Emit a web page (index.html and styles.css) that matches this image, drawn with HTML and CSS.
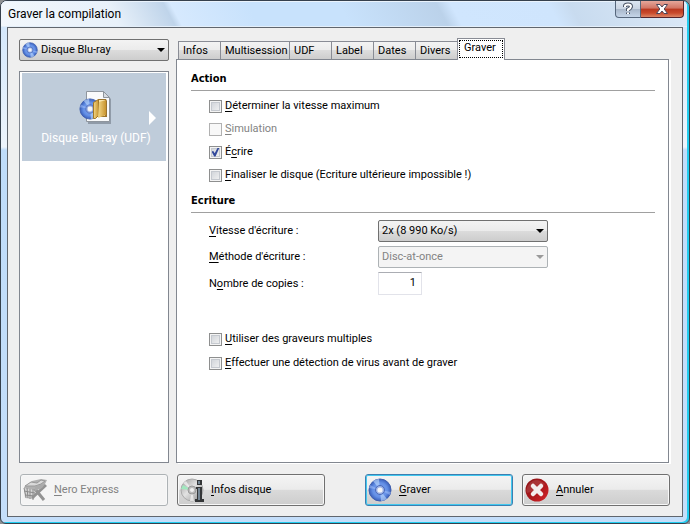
FILE: index.html
```html
<!DOCTYPE html>
<html lang="fr">
<head>
<meta charset="utf-8">
<title>Graver la compilation</title>
<link rel="stylesheet" href="styles.css">
</head>
<body>
<svg class="defs" aria-hidden="true">
  <defs>
    <radialGradient id="blue" cx=".5" cy=".5" r=".55"><stop offset="0" stop-color="#7fa3ef"/><stop offset=".6" stop-color="#6490e6"/><stop offset="1" stop-color="#2c50ae"/></radialGradient>
    <linearGradient id="gold"><stop offset="0" stop-color="#f3d888"/><stop offset="1" stop-color="#c8942f"/></linearGradient>
    <linearGradient id="silver" x2="1" y2="1"><stop offset="0" stop-color="#999"/><stop offset=".45" stop-color="#e2e2e2"/><stop offset="1" stop-color="#8e8e8e"/></linearGradient>
    <linearGradient id="red" x2="1" y2="1"><stop offset="0" stop-color="#8c1417"/><stop offset=".5" stop-color="#a8181c"/><stop offset="1" stop-color="#d8252b"/></linearGradient>
    <symbol id="disc" viewBox="0 0 24 24">
      <circle cx="12" cy="12" r="11" fill="url(#blue)" stroke="#3e5eae"/>
      <path d="M12 12 5 3Q8 1 11 1zM12 12 19 21Q16 23 13 23z" fill="#c0dcff" opacity=".6"/>
      <path d="M12 12 1 10 2 7zM12 12 23 14 22 17z" fill="#a5c4fb" opacity=".5"/>
      <circle cx="12" cy="12" r="4.500" fill="#9db3e6" stroke="#4968b8"/>
      <circle cx="12" cy="12" r="2.600" fill="#f4f4f6"/>
    </symbol>
  </defs>
</svg>
<div class="window">
  <header class="titlebar">
    <h1>Graver la compilation</h1>
    <div class="caption">
      <button class="help" type="button" aria-label="Aide"><svg width="12" height="14" viewBox="0 0 12 14"><path d="M3 5V4Q3 2.500 6 2.500T9 4.500Q9 6 6 7.500V9M6 10.500V12" fill="none" stroke="#4b5566" stroke-width="4"/><path d="M3 5V4Q3 2.500 6 2.500T9 4.500Q9 6 6 7.500V9M6 10.500V12" fill="none" stroke="#fff" stroke-width="2"/></svg></button>
      <button class="close" type="button" aria-label="Fermer"><svg width="14" height="12" viewBox="0 0 14 12"><path d="M1.500 1.500H5L7 4 9 1.500H12.500L9.200 6 12.500 10.500H9L7 8 5 10.500H1.500L4.800 6z" fill="#fff" stroke="#4b4558"/></svg></button>
    </div>
  </header>
  <main class="client">
    <div class="content">
      <aside class="side">
        <div class="combo disc-combo">
          <svg class="combo-icon" width="16" height="16"><use href="#disc"/></svg>
          <select aria-label="Type de disque"><option>Disque Blu-ray</option></select>
        </div>
        <div class="list">
          <button class="item" type="button">
            <svg width="34" height="34" viewBox="0 0 34 34">
              <path d="M9 3H26L32 9V34H9z" fill="#77818d" opacity=".65"/>
              <path d="M7.500 1.500H24.500L30.500 7.500V31.500H7.500z" fill="#f9fafb" stroke="#8e959d"/>
              <path d="M24.500 1.500V7.500H30.500z" fill="#d7dbe0" stroke="#8e959d"/>
              <svg x="0" y="8" width="22" height="22"><use href="#disc"/></svg>
              <path d="M19 9H27L28 11V27H18V14z" fill="#9b742e"/>
              <path d="M20 10H26V26H19z" fill="#f8e5ac"/>
              <path d="M14.500 12.500 19.500 9.500V25.500L16.500 28.500H14.500z" fill="url(#gold)" stroke="#a27726"/>
              <path d="M20 12 27 10V25L19 28z" fill="url(#gold)"/>
            </svg>
            <span>Disque Blu-ray (UDF)</span>
          </button>
        </div>
      </aside>
      <section class="tabs">
        <div class="tablist" role="tablist">
          <button type="button" role="tab">Infos</button>
          <button class="wide" type="button" role="tab">Multisession</button>
          <button type="button" role="tab">UDF</button>
          <button type="button" role="tab">Label</button>
          <button type="button" role="tab">Dates</button>
          <button type="button" role="tab">Divers</button>
          <button type="button" role="tab" aria-selected="true"><span>Graver</span></button>
        </div>
        <div class="panel" role="tabpanel">
          <h2>Action</h2>
          <div class="checks">
            <label><input type="checkbox"><span><u>D</u>éterminer la vitesse maximum</span></label>
            <label class="disabled"><input type="checkbox" disabled><span><u>S</u>imulation</span></label>
            <label><input type="checkbox" checked><span>É<u>c</u>rire</span></label>
            <label><input type="checkbox"><span><u>F</u>inaliser le disque (Ecriture ultérieure impossible !)</span></label>
          </div>
          <h2>Ecriture</h2>
          <div class="fields">
            <label for="speed"><u>V</u>itesse d'écriture :</label>
            <div class="combo"><select id="speed"><option>2x (8 990 Ko/s)</option></select></div>
            <label for="method"><u>M</u>éthode d'écriture :</label>
            <div class="combo off"><select id="method" disabled><option>Disc-at-once</option></select></div>
            <label for="copies">N<u>o</u>mbre de copies :</label>
            <input id="copies" type="text" value="1">
          </div>
          <div class="checks extra">
            <label><input type="checkbox"><span><u>U</u>tiliser des graveurs multiples</span></label>
            <label><input type="checkbox"><span><u>E</u>ffectuer une détection de virus avant de graver</span></label>
          </div>
        </div>
      </section>
    </div>
    <footer class="actions">
      <button type="button" disabled>
        <svg width="24" height="24" viewBox="0 0 24 24">
          <path d="M1 9 9 3 18 1 24 2 21 8 13 10 11 21 2 20z" fill="#b0b0b0"/>
          <path d="M2 8 8 4 14 5 18 2 22 3 18 6 12 8z" fill="#d9d9d9" stroke="#999"/>
          <path d="M1 10 12 12 11 21 3 19z" fill="#d5d5d5"/>
          <path d="M1 10 3 19M4 10 5 20M7 11V21M10 11V22M1 13 12 15M2 17 12 18" stroke="#8b8b8b" fill="none"/>
          <path d="M23 7 9 20M12 11 21 22" stroke="#929292" stroke-width="3"/>
          <path d="M12 8 22 6 19 10 12 13z" fill="#aaa"/>
        </svg>
        <span><u>N</u>ero Express</span>
      </button>
      <button type="button">
        <svg width="24" height="24" viewBox="0 0 24 24">
          <circle cx="12" cy="12" r="11" fill="url(#silver)" stroke="#aaa"/>
          <path d="M12 12 3 5 6 3zM12 12 14 23 10 23z" fill="#fff" opacity=".6"/>
          <path d="M12 12 1 11 3 7z" fill="#a0e8be"/>
          <circle cx="12" cy="12" r="4" fill="#bcbcbc" stroke="#999"/><circle cx="12" cy="12" r="2" fill="#f1f1f1"/>
          <path d="M17 2H22V7H17zM16 9H22V21H24V24H15V21H17V11H16z" fill="#343638"/>
          <path d="M18 3H20V6H18zM18 10H20V22H18z" fill="#758694"/>
        </svg>
        <span><u>I</u>nfos disque</span>
      </button>
      <button class="default" type="button">
        <svg width="24" height="24"><use href="#disc"/></svg>
        <span><u>G</u>raver</span>
      </button>
      <button type="button">
        <svg width="24" height="24" viewBox="0 0 24 24">
          <circle cx="12" cy="12" r="11.500" fill="url(#red)"/>
          <path d="M4 6Q11-2 20 6Q15 12 2 15Q0 11 4 6z" fill="#fff" opacity=".12"/>
          <path d="M8 8 16 16M16 8 8 16" stroke="#f3eded" stroke-width="4.500" stroke-linecap="round"/>
        </svg>
        <span><u>A</u>nnuler</span>
      </button>
    </footer>
  </main>
</div>
</body>
</html>
```
FILE: styles.css
```css
* { box-sizing: border-box; }

body {
  margin: 0;
  background: #8d9093;
  color: #000;
  font: 11px/14px Roboto, Tahoma, sans-serif;
}

button, select, input { font: inherit; color: inherit; margin: 0; }
h1, h2 { margin: 0; }
u { text-underline-offset: 2px; }
.defs { position: absolute; width: 0; height: 0; }

.window {
  display: flex;
  flex-direction: column;
  min-height: 100vh;
  padding: 0 6px 6px;
  border: 1px solid #35404d;
  border-radius: 7px 7px 6px 6px;
  background: linear-gradient(#c8dff7, #d5e8fb 28px, #edf4fc 146px, #bfdcfa 149px, #c4defa);
  box-shadow: inset -2px -1px #20cdf0;
}

.titlebar {
  display: flex;
  justify-content: space-between;
  height: 26px;
  margin: 0 -4px 0 -6px;
  padding: 0 3px 0 7px;
  border-radius: 6px 6px 0 0;
  background: linear-gradient(62deg, #f2f7fc 0, #e8f1fa 17%, #bfd4ea 25%, #d6e9fe 26%, #c8e2fc 37%, #c8e2fc 50%, #bbd2ea 64%, #d0e6fe 66%, #cfe5fd 80%, #c8dbef 83%, #dce9f7);
  box-shadow: inset 0 1px #eaf3fc, inset 0 -1px #e4effa;
}

.titlebar h1 {
  font: 12px/26px Roboto, "Open Sans", sans-serif;
}

.caption { display: flex; height: 17px; }
.caption button {
  display: flex;
  align-items: center;
  justify-content: center;
  padding: 0;
  border: 1px solid #56677c;
  border-top: 0;
}
.help {
  width: 26px;
  border-radius: 0 0 0 4px;
  background: linear-gradient(#dce6f1, #c9d4e2 50%, #a7b6c9 50%, #c5d5e8);
}
.caption .close {
  width: 43px;
  border-color: #57242a;
  border-left: 0;
  border-radius: 0 0 4px 0;
  background: linear-gradient(#e5a79b, #d17463 45%, #b93820 50%, #c94a2c 75%, #dd8565);
}

.client {
  flex: 1;
  display: flex;
  flex-direction: column;
  gap: 11px;
  padding: 11px 13px 10px 11px;
  border: 1px solid #60666e;
  background: #efefef;
}

.content { flex: 1; display: flex; gap: 7px; }

.side {
  display: flex;
  flex-direction: column;
  gap: 10px;
  width: 150px;
}

.combo { position: relative; width: 170px; height: 22px; }
.combo::after {
  content: "";
  position: absolute;
  top: 9px;
  right: 4px;
  border: 4px solid transparent;
  border-top-color: #000;
  border-bottom: 0;
  pointer-events: none;
}
.combo select {
  appearance: none;
  width: 100%;
  height: 100%;
  padding: 0 16px 0 3px;
  border: 1px solid #707070;
  border-radius: 2px;
  background: linear-gradient(#f3f3f3, #ebebeb 50%, #dcdcdc 50%, #cdcdcd);
}
.combo.off::after { border-top-color: #9a9a9a; }
.combo.off select {
  border-color: #adb2b5;
  background: #f4f4f4;
  color: #838383;
  opacity: 1;
}
.combo.disc-combo { width: 100%; }
.disc-combo select { padding-left: 21px; }
.combo-icon { position: absolute; left: 3px; top: 3px; pointer-events: none; }

.list {
  flex: 1;
  padding: 1px 2px;
  border: 1px solid #828790;
  background: #fff;
}
.item {
  position: relative;
  display: flex;
  flex-direction: column;
  align-items: center;
  gap: 7px;
  width: 100%;
  height: 88px;
  padding: 17px 0 0 4px;
  border: 0;
  background: #bfccda;
  color: #fff;
  font-size: 12px;
}
.item::after {
  content: "";
  position: absolute;
  top: 38px;
  right: 10px;
  border: 7px solid transparent;
  border-left-color: #fff;
  border-right: 0;
}

.tabs { flex: 1; display: flex; flex-direction: column; }
.tablist {
  display: flex;
  align-items: flex-end;
  height: 21px;
  padding-left: 2px;
  margin-bottom: -1px;
}
.tablist button {
  min-width: 42px;
  height: 19px;
  padding: 0 0 0 4px;
  border: 1px solid #898c95;
  border-right-width: 0;
  background: linear-gradient(#f3f3f3, #ebebeb 50%, #dddddd 50%, #cdcdcd);
  text-align: left;
}
.tablist .wide { min-width: 69px; }
.tablist button[aria-selected] {
  z-index: 1;
  height: 22px;
  min-width: 48px;
  padding: 1px 1px 2px;
  border-right-width: 1px;
  border-bottom: 0;
  background: #fff;
}
.tablist span {
  display: block;
  padding: 0 4px 2px;
  border: 1px dotted #000;
}

.panel {
  flex: 1;
  padding: 12px 13px 12px 14px;
  border: 1px solid #828790;
  background: #fff;
  box-shadow: 2px 1px #fff;
}
.panel h2 {
  padding-bottom: 4px;
  border-bottom: 1px solid #a0a0a0;
  font: bold 11px/14px "DejaVu Sans Condensed", Tahoma, sans-serif;
}

.checks {
  display: grid;
  gap: 9px;
  padding: 8px 18px;
  justify-items: start;
}
.checks label { display: flex; gap: 3px; align-items: center; height: 14px; }
.checks input {
  appearance: none;
  width: 13px;
  height: 13px;
  border: 1px solid #8e8f8f;
  background: linear-gradient(135deg, #cbcfd5, #f6f6f6);
  box-shadow: inset 0 0 0 1px #f4f4f4, inset 0 0 0 2px #c5c9cf;
}
.checks input:checked {
  display: grid;
  place-items: center;
}
.checks input:checked::before {
  content: "";
  width: 8px;
  height: 9px;
  background: #31489b;
  clip-path: polygon(0 45%, 22% 38%, 40% 65%, 78% 0, 100% 0, 50% 100%, 34% 100%);
}
.checks input:disabled {
  border-color: #b1b1b1;
  background: #f8f8f8;
  box-shadow: none;
}
.checks .disabled { color: #838383; }
.checks + h2 { margin-top: 4px; }
.checks.extra { gap: 10px; padding-top: 37px; }

.fields {
  display: grid;
  grid-template-columns: 169px auto;
  justify-content: start;
  align-items: center;
  gap: 4px 0;
  padding: 7px 18px 0;
}
.fields > input {
  width: 44px;
  height: 23px;
  padding: 0 5px 2px;
  border: 1px solid #e2e3ea;
  border-top-color: #abadb3;
  background: #fff;
  text-align: right;
}

.actions {
  display: grid;
  grid-template-columns: repeat(2, 1fr) 22px repeat(2, 1fr);
  column-gap: 9px;
  margin: 0 -1px 0 1px;
}
.actions button {
  display: flex;
  align-items: center;
  gap: 7px;
  height: 32px;
  padding: 0 2px;
  border: 1px solid #707070;
  border-radius: 3px;
  background: linear-gradient(#f4f4f4, #ebebeb 48%, #dadada 50%, #cdcdcd);
  box-shadow: inset 0 0 0 1px #f8f8f8;
}
.actions .default {
  grid-column: 4;
  border-color: #3c7fb1;
  box-shadow: inset 0 0 0 1px #42c8ef;
}
.actions button:disabled {
  border-color: #adb2b5;
  background: #f4f4f4;
  color: #838383;
}
```
